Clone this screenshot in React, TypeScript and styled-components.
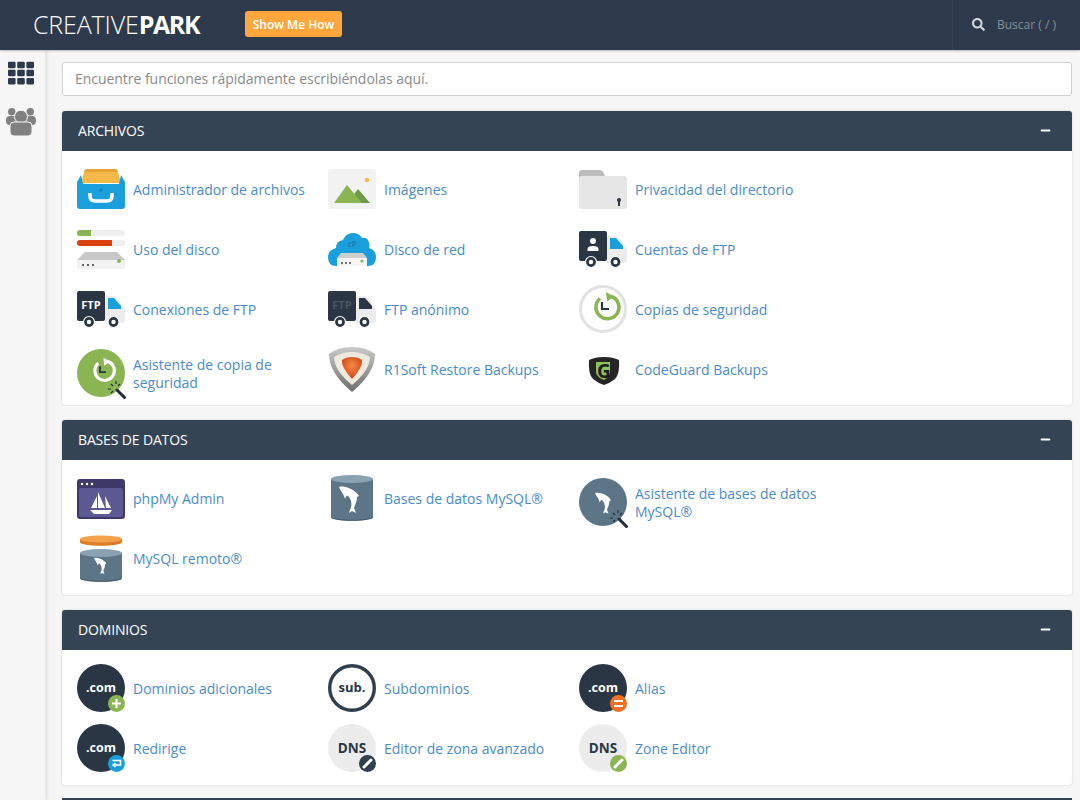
import React from "react";
import styled, { createGlobalStyle } from "styled-components";
import { FaMinus, FaSearch, FaTh } from "react-icons/fa";

const GlobalStyle = createGlobalStyle`
  html, body {
    margin: 0;
    padding: 0;
    background: #f6f6f6;
  }
  * {
    box-sizing: border-box;
  }
`;

const Page = styled.div`
  display: flex;
  flex-direction: column;
  height: 800px;
  overflow: hidden;
  font-family: "Open Sans", "Liberation Sans", sans-serif;
`;

const TopBar = styled.header`
  display: flex;
  align-items: center;
  flex: 0 0 50px;
  padding-bottom: 2px;
  background: #2d3a4b;
  box-shadow: 0 1px 2px rgba(0, 0, 0, 0.25);
  position: relative;
  z-index: 2;
`;

const Logo = styled.div`
  width: 212px;
  margin-left: 33px;
  color: #ffffff;
  font-size: 25px;
  line-height: 48px;
  font-weight: 300;
  letter-spacing: -0.15px;
  white-space: nowrap;

  b {
    font-weight: 700;
    letter-spacing: -1.4px;
  }
`;

const HelpButton = styled.button`
  width: 97px;
  height: 26px;
  padding: 0;
  border: 0;
  border-radius: 3px;
  background: #ffa63c;
  color: #ffffff;
  font-family: inherit;
  font-size: 12px;
  font-weight: 600;
`;

const TopSearch = styled.div`
  display: flex;
  align-items: center;
  gap: 12px;
  height: 50px;
  margin: 0 0 -2px auto;
  width: 128px;
  padding: 0 0 2px 19px;
  border-left: 1px solid #344355;
  color: #878f98;
  font-size: 12px;

  svg {
    color: #d5d8db;
    font-size: 13px;
  }
`;

const Body = styled.div`
  display: flex;
  flex: 1;
  min-height: 0;
`;

const SideNav = styled.nav`
  display: flex;
  flex-direction: column;
  align-items: center;
  gap: 22px;
  flex: 0 0 46px;
  padding: 10px 3px 0 0;
  background: #f6f6f6;
  border-right: 1px solid #e6e6e6;
  box-shadow: 1px 0 3px rgba(0, 0, 0, 0.1);
`;

const AppsIcon = styled(FaTh)`
  width: 28px;
  height: 26px;
  color: #2d3a4b;
`;

const PeopleIcon = styled.svg`
  width: 30px;
  height: 28px;
  fill: #808080;
`;

const Main = styled.main`
  flex: 1;
  padding: 12px 8px 0 16px;
`;

const QuickFind = styled.input`
  display: block;
  width: 100%;
  height: 34px;
  padding: 0 12px 2px;
  margin-bottom: 15px;
  border: 1px solid #d0d0d0;
  border-radius: 3px;
  background: #ffffff;
  font-family: inherit;
  font-size: 14px;
  letter-spacing: -0.04px;

  &::placeholder {
    color: #8a8a8a;
    opacity: 1;
  }
`;

const Panel = styled.section`
  margin-bottom: 15px;
  border-radius: 3px;
  background: #ffffff;
  box-shadow: 0 0 2px rgba(0, 0, 0, 0.2);
  overflow: hidden;

  &:last-of-type {
    margin-bottom: 13px;
  }
`;

const PanelHeader = styled.div`
  display: flex;
  align-items: center;
  justify-content: space-between;
  height: 40px;
  padding: 0 21px 2px 16px;
  background: #354454;
  color: #ffffff;
  font-size: 14px;
  letter-spacing: -0.15px;

  svg {
    font-size: 11px;
  }
`;

const ItemGrid = styled.div`
  display: grid;
  grid-template-columns: repeat(3, 251px);
  padding: 8px 15px 7px;

  ${Panel}:first-of-type & {
    padding-bottom: 6px;
  }
`;

const Item = styled.a<{ $twoLine?: boolean }>`
  display: flex;
  align-items: center;
  gap: 8px;
  height: 60px;
  padding: ${(p) => (p.$twoLine ? "8px" : "0")} 5px 0 0;
  color: #4a8ccb;
  font-size: 14px;
  line-height: 18px;
`;

const Label = styled.span`
  margin-top: 1px;
`;

const IconBox = styled.svg`
  flex: 0 0 48px;
  width: 48px;
  height: 48px;
  overflow: visible;
`;

const IconText = styled.text`
  font-family: "Open Sans", "Liberation Sans", sans-serif;
  font-weight: 700;
  text-anchor: middle;
`;

const Icon: React.FC<{ children: React.ReactNode }> = ({ children }) => (
  <IconBox viewBox="0 0 48 48">{children}</IconBox>
);

const Dolphin: React.FC<{ x: number; y: number; s?: number }> = ({ x, y, s = 1 }) => (
  <path
    transform={`translate(${x} ${y}) scale(${s})`}
    fill="#ffffff"
    d="M0 0C4-1 8 0 12 2C16 4 18 6 20 9L18 10C18 14 16 18 15 21L17 26L13 24L10 26L12 20C13 16 12 12 9 9C7 8 7 10 6 12C5 9 4 6 2 4Z"
  />
);

const Wand: React.FC<{ x: number; y: number }> = ({ x, y }) => (
  <g transform={`translate(${x} ${y})`}>
    <path d="M4 4l7.500 7.500" stroke="#222c36" strokeWidth="3" strokeLinecap="round" />
    <path
      d="M-2-2l2 2M3-5v3M-5 3h3M7-2l-2 2M-2 7l2-2"
      stroke="#222c36"
      strokeWidth="1.200"
    />
  </g>
);

const Truck: React.FC<{ windowColor?: string; children?: React.ReactNode }> = ({
  windowColor = "#1a9fdd",
  children,
}) => (
  <>
    <path d="M30 11h6q3 0 5 3l5 7q2 2 2 5v9q0 3-3 3H28V13q0-2 2-2z" fill="#ececec" />
    <path d="M31 13h6l7 8v3H31z" fill={windowColor} />
    <rect x="0" y="6" width="28" height="30" rx="2" fill="#2a3644" />
    <circle cx="12" cy="37" r="5.500" fill="#2a3644" stroke="#ffffff" strokeWidth="1.200" />
    <circle cx="12" cy="37" r="2.200" fill="#ffffff" />
    <circle cx="36.500" cy="37" r="5.500" fill="#2a3644" stroke="#ffffff" strokeWidth="1.200" />
    <circle cx="36.500" cy="37" r="2.200" fill="#ffffff" />
    {children}
  </>
);

const ClockArrow: React.FC<{ color: string; hands: string }> = ({ color, hands }) => (
  <>
    <path
      d="M29.500 13.500A11.500 11.500 0 1 1 18 15.500"
      fill="none"
      stroke={color}
      strokeWidth="3.600"
    />
    <path d="M24 9l8 4.500-7 5z" fill={color} />
    <path d="M20 19v7h7" fill="none" stroke={hands} strokeWidth="2.200" />
  </>
);

const Cylinder: React.FC<{ top: number; bottom: number }> = ({ top, bottom }) => (
  <>
    <path
      d={`M3 ${top + 4}v${bottom - top - 8}c0 5 42 5 42 0V${top + 4}z`}
      fill="#5c7687"
    />
    <ellipse cx="24" cy={top + 4} rx="21" ry="4" fill="#8aa2b1" />
    <path
      d={`M3 ${bottom - 5}v1c0 5 42 5 42 0v-1c0 5-42 5-42 0z`}
      fill="#435a69"
    />
  </>
);

const ComCircle: React.FC = () => (
  <>
    <circle cx="24" cy="24" r="24" fill="#2a3644" />
    <IconText x="24" y="28" fontSize="12.500" fill="#ffffff">
      .com
    </IconText>
  </>
);

const DnsCircle: React.FC = () => (
  <>
    <circle cx="24" cy="24" r="24" fill="#ececec" />
    <IconText x="24" y="29" fontSize="13.500" fill="#2a3644">
      DNS
    </IconText>
  </>
);

const Badge: React.FC<{ color: string; children: React.ReactNode }> = ({ color, children }) => (
  <>
    <circle cx="39.500" cy="39.500" r="8.500" fill={color} />
    <g stroke="#ffffff" strokeWidth="2.200" fill="none">
      {children}
    </g>
  </>
);

const Pencil: React.FC = () => <path d="M36 43l7-7" strokeWidth="3" strokeLinecap="round" />;

const FileManagerIcon = () => (
  <Icon>
    <path d="M7 7q0-3 3-3h28q3 0 3 3l3 11H4z" fill="#f5b94a" />
    <path d="M8 5q1-1 2-1h28q1 0 2 1l.5 2h-33z" fill="#e7a136" />
    <path
      d="M0 17l4-7 2 9h36l2-9 4 7v24q0 3-3 3H3q-3 0-3-3z"
      fill="#1a9fdd"
    />
    <path
      d="M13 28v3q0 5 5 5h12q5 0 5-5v-3"
      fill="none"
      stroke="#ffffff"
      strokeWidth="3.500"
    />
    <path d="M22 26l2-3 2 1-2 3z" fill="#1480b5" />
  </Icon>
);

const ImagesIcon = () => (
  <Icon>
    <rect x="0" y="4" width="48" height="40" rx="3" fill="#f2f2f2" />
    <circle cx="39" cy="15" r="2.200" fill="#f5b94a" />
    <path d="M24 32l6-8 12 14H24z" fill="#6c9a45" />
    <path d="M6 38l13-18 15 18z" fill="#8ab552" />
  </Icon>
);

const FolderLockIcon = () => (
  <Icon>
    <path d="M3 5h18q3 0 5 6v4H0V8q0-3 3-3z" fill="#bcbcbc" />
    <path d="M0 14q0-3 3-3h42q3 0 3 3v27q0 3-3 3H3q-3 0-3-3z" fill="#e6e6e6" />
    <circle cx="40" cy="35" r="2" fill="#2a3644" />
    <rect x="39" y="35" width="2" height="6" fill="#2a3644" />
  </Icon>
);

const DiskUsageIcon = () => (
  <Icon>
    <rect x="0" y="5" width="48" height="6" rx="3" fill="#efefef" />
    <path d="M3 5h11v6H3a3 3 0 0 1 0-6z" fill="#8ab552" />
    <rect x="0" y="15" width="48" height="6" rx="3" fill="#efefef" />
    <path d="M3 15h32v6H3a3 3 0 0 1 0-6z" fill="#d8410f" />
    <path d="M8 27h32l8 8H0z" fill="#c8c8c8" />
    <path d="M0 35h48v7q0 2-2 2H2q-2 0-2-2z" fill="#f2f2f2" />
    <circle cx="42" cy="36" r="2" fill="#8ab552" />
    <circle cx="6" cy="40" r="1.100" fill="#444" />
    <circle cx="11" cy="40" r="1.100" fill="#444" />
    <circle cx="16" cy="40" r="1.100" fill="#444" />
  </Icon>
);

const NetDiskIcon = () => (
  <Icon>
    <path
      d="M8 41q-8 0-8-9 0-7 8-9 0-7 7-8 3-7 10-7 6 0 9 5 6-1 7 5 1 3 0 5 7 2 7 9 0 9-8 9z"
      fill="#1a9fdd"
    />
    <path d="M13 28h22l4 5H9z" fill="#cfcfcf" />
    <path d="M9 33h30v8H9z" fill="#f6f6f6" />
    <circle cx="34" cy="36" r="1.600" fill="#8ab552" />
    <circle cx="14" cy="38" r="1" fill="#444" />
    <circle cx="18" cy="38" r="1" fill="#444" />
    <circle cx="22" cy="38" r="1" fill="#444" />
    <IconText x="24" y="22" fontSize="8" fill="#1480b5">
      cP
    </IconText>
  </Icon>
);

const FtpAccountsIcon = () => (
  <Icon>
    <Truck>
      <circle cx="14" cy="16" r="3" fill="#ffffff" />
      <path d="M8.500 26v-2q0-3 5.500-3t5.500 3v2z" fill="#ffffff" />
    </Truck>
  </Icon>
);

const FtpConnectionsIcon = () => (
  <Icon>
    <Truck>
      <IconText x="14" y="24" fontSize="11" fill="#ffffff">
        FTP
      </IconText>
    </Truck>
  </Icon>
);

const FtpAnonIcon = () => (
  <Icon>
    <Truck windowColor="#2a3644">
      <IconText x="14" y="24" fontSize="11" fill="#4a5866">
        FTP
      </IconText>
    </Truck>
  </Icon>
);

const BackupIcon = () => (
  <Icon>
    <circle cx="24" cy="24" r="22.500" fill="#ffffff" stroke="#e2e2e2" strokeWidth="3" />
    <g transform="translate(3 -2)">
      <ClockArrow color="#8ab552" hands="#2a3644" />
    </g>
  </Icon>
);

const BackupWizardIcon = () => (
  <Icon>
    <circle cx="24" cy="24" r="24" fill="#8ab552" />
    <g transform="translate(6 1) scale(.85)">
      <ClockArrow color="#ffffff" hands="#2a3644" />
    </g>
    <Wand x={36} y={37} />
  </Icon>
);

const R1SoftIcon = () => (
  <Icon>
    <defs>
      <linearGradient id="r1Rim" x1="0" y1="0" x2="0" y2="1">
        <stop offset="0" stopColor="#c9c9c9" />
        <stop offset="1" stopColor="#6f6f6f" />
      </linearGradient>
      <radialGradient id="r1Gem" cx="0.5" cy="0.4" r="0.6">
        <stop offset="0" stopColor="#f58a46" />
        <stop offset="1" stopColor="#cf4313" />
      </radialGradient>
    </defs>
    <path d="M24 2q14 0 23 7 0 19-23 38Q1 28 1 9q9-7 23-7z" fill="url(#r1Rim)" />
    <path d="M24 7q10 0 18 5 0 13-18 28Q6 25 6 12q8-5 18-5z" fill="#efe9de" />
    <path d="M24 12q6 0 10 3 1 7-10 19-11-12-10-19 4-3 10-3z" fill="url(#r1Gem)" />
  </Icon>
);

const CodeGuardIcon = () => (
  <Icon>
    <path d="M25 12q9 0 15 3 1 14-4 19-5 4-11 6-6-2-11-6-5-5-4-19 6-3 15-3z" fill="#252525" />
    <path d="M17 17h14v11q-2 5-6 7-6-2-8-7z" fill="#8fbf5a" />
    <IconText x="25" y="33" fontSize="19" fill="#1d1d1d">
      G
    </IconText>
  </Icon>
);

const PhpMyAdminIcon = () => (
  <Icon>
    <rect x="0" y="5" width="48" height="40" rx="3" fill="#3d3a6a" />
    <rect x="2" y="14" width="44" height="29" rx="2" fill="#5d5993" />
    <circle cx="5" cy="10" r="1.200" fill="#ffffff" />
    <circle cx="10" cy="10" r="1.200" fill="#ffffff" />
    <circle cx="15" cy="10" r="1.200" fill="#ffffff" />
    <path d="M14 34l6-12v12zM21 34V18l7 16zM28 22l6 12h-5z" fill="#ffffff" />
    <path d="M13 36h22l-3 4H17z" fill="#ffffff" />
  </Icon>
);

const MysqlIcon = () => (
  <Icon>
    <Cylinder top={1} bottom={47} />
    <Dolphin x={11} y={13} />
  </Icon>
);

const MysqlWizardIcon = () => (
  <Icon>
    <circle cx="24" cy="24" r="24" fill="#5c7687" />
    <Dolphin x={16} y={15} s={0.8} />
    <Wand x={36} y={37} />
  </Icon>
);

const MysqlRemoteIcon = () => (
  <Icon>
    <path d="M3 5v3c0 5 42 5 42 0V5z" fill="#dd7d2a" />
    <ellipse cx="24" cy="5" rx="21" ry="3.500" fill="#f5a04a" />
    <Cylinder top={15} bottom={48} />
    <Dolphin x={17} y={24} s={0.62} />
  </Icon>
);

const AddonDomainIcon = () => (
  <Icon>
    <ComCircle />
    <Badge color="#8ab552">
      <path d="M35 39.500h9M39.500 35v9" />
    </Badge>
  </Icon>
);

const SubdomainIcon = () => (
  <Icon>
    <circle cx="24" cy="24" r="22.300" fill="#ffffff" stroke="#2f3f4e" strokeWidth="3.400" />
    <IconText x="24" y="28" fontSize="13" fill="#2a3644">
      sub.
    </IconText>
  </Icon>
);

const AliasIcon = () => (
  <Icon>
    <ComCircle />
    <Badge color="#f26f21">
      <path d="M35 37h9M35 42h9" />
    </Badge>
  </Icon>
);

const RedirectIcon = () => (
  <Icon>
    <ComCircle />
    <Badge color="#1a9fdd">
      <path d="M35.500 36.500h8v4.500h-7M38.500 39l-2.500 2 2.500 2" strokeWidth="1.600" />
    </Badge>
  </Icon>
);

const ZoneAdvancedIcon = () => (
  <Icon>
    <DnsCircle />
    <Badge color="#2f3f4e">
      <Pencil />
    </Badge>
  </Icon>
);

const ZoneEditorIcon = () => (
  <Icon>
    <DnsCircle />
    <Badge color="#8ab552">
      <Pencil />
    </Badge>
  </Icon>
);

type Entry = { label: string; icon: React.ReactNode; twoLine?: boolean };

const sections: { title: string; items: Entry[] }[] = [
  {
    title: "ARCHIVOS",
    items: [
      { label: "Administrador de archivos", icon: <FileManagerIcon /> },
      { label: "Imágenes", icon: <ImagesIcon /> },
      { label: "Privacidad del directorio", icon: <FolderLockIcon /> },
      { label: "Uso del disco", icon: <DiskUsageIcon /> },
      { label: "Disco de red", icon: <NetDiskIcon /> },
      { label: "Cuentas de FTP", icon: <FtpAccountsIcon /> },
      { label: "Conexiones de FTP", icon: <FtpConnectionsIcon /> },
      { label: "FTP anónimo", icon: <FtpAnonIcon /> },
      { label: "Copias de seguridad", icon: <BackupIcon /> },
      { label: "Asistente de copia de seguridad", icon: <BackupWizardIcon />, twoLine: true },
      { label: "R1Soft Restore Backups", icon: <R1SoftIcon /> },
      { label: "CodeGuard Backups", icon: <CodeGuardIcon /> },
    ],
  },
  {
    title: "BASES DE DATOS",
    items: [
      { label: "phpMy Admin", icon: <PhpMyAdminIcon /> },
      { label: "Bases de datos MySQL®", icon: <MysqlIcon /> },
      { label: "Asistente de bases de datos MySQL®", icon: <MysqlWizardIcon />, twoLine: true },
      { label: "MySQL remoto®", icon: <MysqlRemoteIcon /> },
    ],
  },
  {
    title: "DOMINIOS",
    items: [
      { label: "Dominios adicionales", icon: <AddonDomainIcon /> },
      { label: "Subdominios", icon: <SubdomainIcon /> },
      { label: "Alias", icon: <AliasIcon /> },
      { label: "Redirige", icon: <RedirectIcon /> },
      { label: "Editor de zona avanzado", icon: <ZoneAdvancedIcon /> },
      { label: "Zone Editor", icon: <ZoneEditorIcon /> },
    ],
  },
];

const App: React.FC = () => (
  <Page>
    <GlobalStyle />
    <TopBar>
      <Logo>
        CREATIVE<b>PARK</b>
      </Logo>
      <HelpButton>Show Me How</HelpButton>
      <TopSearch>
        <FaSearch />
        Buscar ( / )
      </TopSearch>
    </TopBar>
    <Body>
      <SideNav>
        <AppsIcon />
        <PeopleIcon viewBox="0 0 30 28">
          <circle cx="5.700" cy="3.700" r="3.700" />
          <circle cx="24.300" cy="3.700" r="3.700" />
          <rect x="0" y="8" width="30" height="9" rx="4" />
          <circle cx="15" cy="8.700" r="6.500" stroke="#f6f6f6" strokeWidth="1" />
          <rect x="4" y="14" width="22" height="14" rx="4" stroke="#f6f6f6" strokeWidth="1" />
        </PeopleIcon>
      </SideNav>
      <Main>
        <QuickFind placeholder="Encuentre funciones rápidamente escribiéndolas aquí." />
        {sections.map((section) => (
          <Panel key={section.title}>
            <PanelHeader>
              {section.title}
              <FaMinus />
            </PanelHeader>
            <ItemGrid>
              {section.items.map((item) => (
                <Item key={item.label} $twoLine={item.twoLine}>
                  {item.icon}
                  <Label>{item.label}</Label>
                </Item>
              ))}
            </ItemGrid>
          </Panel>
        ))}
        <PanelHeader />
      </Main>
    </Body>
  </Page>
);

export default App;
